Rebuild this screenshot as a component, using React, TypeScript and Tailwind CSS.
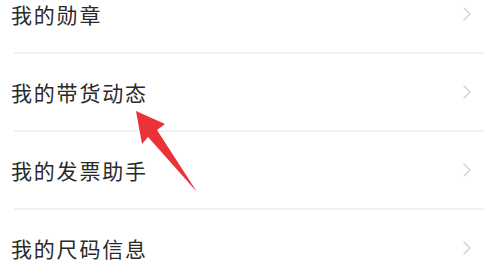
import React from "react";

const items = ["我的勋章", "我的带货动态", "我的发票助手", "我的尺码信息"];

function Chevron() {
  return (
    <svg width="10" height="16" viewBox="0 0 10 16" fill="none">
      <path d="M2 2 L8 8 L2 14" stroke="#d4d4d4" strokeWidth="1.6" strokeLinecap="round" strokeLinejoin="round" />
    </svg>
  );
}

export default function App() {
  return (
    <div className="relative w-[500px] h-[279px] overflow-hidden bg-white" style={{ fontFamily: '"Noto Sans CJK SC", "Noto Sans", sans-serif' }}>
      <div className="flex flex-col mt-[-24px]">
        {items.map((t, i) => (
          <div key={t} className="flex flex-col">
            <div className="flex items-center justify-between h-[76px] pl-[11px] pr-[28px]">
              <span className="text-[21px] tracking-[1.8px] text-[#2a2a2a] leading-none">{t}</span>
              <Chevron />
            </div>
            {i < items.length - 1 && <div className="ml-[14px] mr-[16px] h-[2px] bg-[#f1f1f1]" />}
          </div>
        ))}
      </div>
      <svg className="absolute left-0 top-0" width="500" height="279" viewBox="0 0 500 279">
        <polygon points="136,111 165,124 157,130 197,192 148,137 142,144" fill="#ec3138" />
      </svg>
    </div>
  );
}
